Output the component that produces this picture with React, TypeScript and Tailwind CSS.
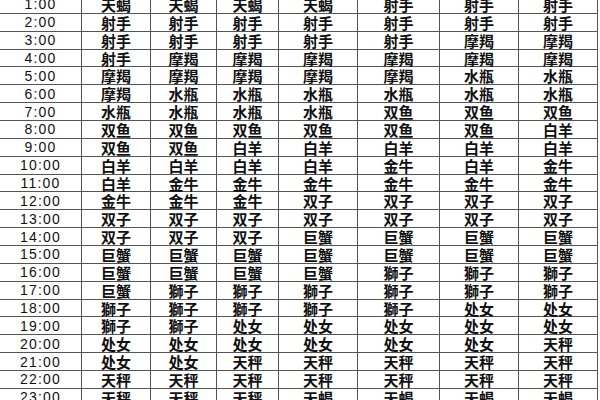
import React from "react";

const rows: [string, string[]][] = [
  ["1:00", ["天蝎", "天蝎", "天蝎", "天蝎", "射手", "射手", "射手"]],
  ["2:00", ["射手", "射手", "射手", "射手", "射手", "射手", "射手"]],
  ["3:00", ["射手", "射手", "射手", "射手", "射手", "摩羯", "摩羯"]],
  ["4:00", ["射手", "摩羯", "摩羯", "摩羯", "摩羯", "摩羯", "摩羯"]],
  ["5:00", ["摩羯", "摩羯", "摩羯", "摩羯", "摩羯", "水瓶", "水瓶"]],
  ["6:00", ["摩羯", "水瓶", "水瓶", "水瓶", "水瓶", "水瓶", "水瓶"]],
  ["7:00", ["水瓶", "水瓶", "水瓶", "水瓶", "双鱼", "双鱼", "双鱼"]],
  ["8:00", ["双鱼", "双鱼", "双鱼", "双鱼", "双鱼", "双鱼", "白羊"]],
  ["9:00", ["双鱼", "双鱼", "白羊", "白羊", "白羊", "白羊", "白羊"]],
  ["10:00", ["白羊", "白羊", "白羊", "白羊", "金牛", "白羊", "金牛"]],
  ["11:00", ["白羊", "金牛", "金牛", "金牛", "金牛", "金牛", "金牛"]],
  ["12:00", ["金牛", "金牛", "金牛", "双子", "双子", "双子", "双子"]],
  ["13:00", ["双子", "双子", "双子", "双子", "双子", "双子", "双子"]],
  ["14:00", ["双子", "双子", "双子", "巨蟹", "巨蟹", "巨蟹", "巨蟹"]],
  ["15:00", ["巨蟹", "巨蟹", "巨蟹", "巨蟹", "巨蟹", "巨蟹", "巨蟹"]],
  ["16:00", ["巨蟹", "巨蟹", "巨蟹", "巨蟹", "獅子", "獅子", "獅子"]],
  ["17:00", ["巨蟹", "獅子", "獅子", "獅子", "獅子", "獅子", "獅子"]],
  ["18:00", ["獅子", "獅子", "獅子", "獅子", "獅子", "处女", "处女"]],
  ["19:00", ["獅子", "獅子", "处女", "处女", "处女", "处女", "处女"]],
  ["20:00", ["处女", "处女", "处女", "处女", "处女", "处女", "天秤"]],
  ["21:00", ["处女", "处女", "天秤", "天秤", "天秤", "天秤", "天秤"]],
  ["22:00", ["天秤", "天秤", "天秤", "天秤", "天秤", "天秤", "天秤"]],
  ["23:00", ["天秤", "天秤", "天秤", "天蝎", "天蝎", "天蝎", "天蝎"]],
];

const colW = [
  "w-[69px]",
  "w-[66px]",
  "w-[62px]",
  "w-[79px]",
  "w-[82px]",
  "w-[79px]",
  "w-[79px]",
];

const scFont = '"Noto Sans CJK SC", "Noto Sans CJK TC", sans-serif';
const tcFont = '"Noto Sans CJK TC", "Noto Sans CJK SC", sans-serif';

export default function App() {
  return (
    <div className="w-[600px] h-[400px] overflow-hidden bg-white text-[#111]">
      <div className="-mt-[4px] w-[598px]">
        {rows.map(([t, cells]) => (
          <div key={t} className="flex h-[17.86px] border-b border-[#555]">
            <div
              className="w-[82px] shrink-0 border-r border-[#555] flex items-center justify-center text-[14px] tracking-[1.2px] leading-none"
              style={{ fontFamily: '"Liberation Sans", Arial, sans-serif' }}
            >
              {t}
            </div>
            {cells.map((c, i) => (
              <div
                key={i}
                className={`${colW[i]} shrink-0 border-r border-[#555] flex items-center justify-center text-[15px] font-bold leading-none`}
                style={{ fontFamily: c.includes("獅") ? tcFont : scFont }}
              >
                {c}
              </div>
            ))}
          </div>
        ))}
      </div>
    </div>
  );
}
